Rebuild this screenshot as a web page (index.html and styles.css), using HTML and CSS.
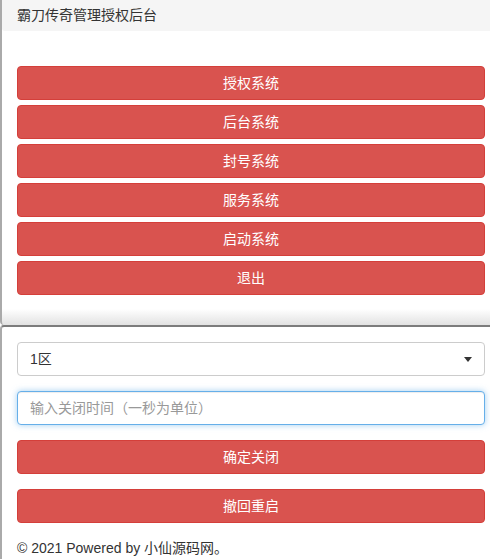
FILE: index.html
```html
<!DOCTYPE html>
<html lang="zh-CN">
<head>
<meta charset="utf-8">
<title>霸刀传奇管理授权后台</title>
<link rel="stylesheet" href="styles.css">
</head>
<body>
<div class="panel panel-top">
  <div class="panel-heading">霸刀传奇管理授权后台</div>
  <div class="panel-body menu">
    <button class="btn">授权系统</button>
    <button class="btn">后台系统</button>
    <button class="btn">封号系统</button>
    <button class="btn">服务系统</button>
    <button class="btn">启动系统</button>
    <button class="btn">退出</button>
  </div>
</div>
<div class="panel panel-bottom">
  <div class="panel-body form">
    <div class="select-wrap">
      <select class="control">
        <option>1区</option>
        <option>2区</option>
      </select>
    </div>
    <input class="control focused" type="text" placeholder="输入关闭时间（一秒为单位）">
    <button class="btn">确定关闭</button>
    <button class="btn">撤回重启</button>
    <div class="footer">© 2021 Powered by 小仙源码网。</div>
  </div>
</div>
</body>
</html>
```

FILE: styles.css
```css
* { box-sizing: border-box; }
html, body { margin: 0; padding: 0; background: #fff; }
body {
  font-family: "Liberation Sans", Arial, "Noto Sans CJK SC", sans-serif;
  font-size: 14px;
  line-height: 20px;
  color: #333;
  width: 490px;
}
.panel {
  border-left: 2px solid #aaa;
  background: #fff;
}
.panel-top {
  border-bottom-left-radius: 4px;
  background: linear-gradient(to bottom, #fff calc(100% - 16px), #e2e2e2);
}
.panel-bottom {
  border-top: 2px solid #7c7c7c;
  border-top-left-radius: 4px;
}
.panel-heading {
  background: #f5f5f5;
  padding: 5px 15px 6px 15px;
  border-bottom-left-radius: 3px;
  color: #333;
}
.panel-body.menu {
  padding: 30px 5px 30px 15px;
  display: flex;
  flex-direction: column;
  gap: 5px;
}
.panel-body.menu .btn:first-child { margin-top: 5px; }
.panel-body.form {
  padding: 15px 5px 1px 15px;
  display: flex;
  flex-direction: column;
  gap: 15px;
}
.btn {
  display: block;
  width: 100%;
  height: 34px;
  padding: 6px 12px;
  font-family: inherit;
  font-size: 14px;
  line-height: 20px;
  color: #fff;
  background: #d9534f;
  border: 1px solid #d43f3a;
  border-radius: 4px;
  text-align: center;
  margin: 0;
}
.control {
  display: block;
  width: 100%;
  height: 34px;
  padding: 6px 12px;
  font-family: inherit;
  font-size: 14px;
  line-height: 20px;
  color: #333;
  background: #fff;
  border: 1px solid #ccc;
  border-radius: 4px;
  box-shadow: inset 0 1px 1px rgba(0,0,0,.075);
  margin: 0;
  outline: none;
}
select.control {
  appearance: none;
  -webkit-appearance: none;
  box-shadow: none;
}
.select-wrap { position: relative; }
.select-wrap::after {
  content: "";
  position: absolute;
  right: 13px;
  top: 15px;
  width: 0;
  height: 0;
  border-left: 4.5px solid transparent;
  border-right: 4.5px solid transparent;
  border-top: 5px solid #333;
  pointer-events: none;
}
.focused {
  border-color: #66afe9;
  box-shadow: inset 0 1px 1px rgba(0,0,0,.075), 0 0 6px rgba(102,175,233,.6);
}
.control::placeholder { color: #999; opacity: 1; }
.footer {
  padding-bottom: 10px;
  color: #333;
}
```
